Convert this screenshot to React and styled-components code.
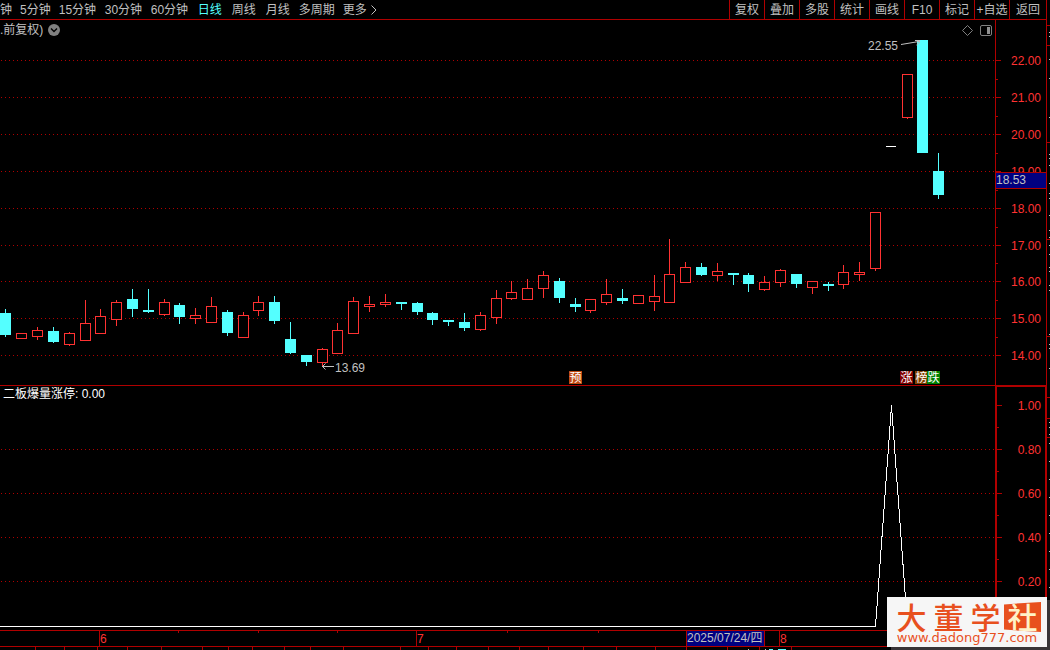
import {useState} from 'react';
import styled, {createGlobalStyle} from 'styled-components';

const RED = '#b00000';
const UP = '#ff3232';
const DOWN = '#54ffff';
const GREY = '#c0c0c0';
const NAVY = '#000080';

const GlobalStyle = createGlobalStyle`
  * {
    box-sizing: border-box;
  }

  body {
    margin: 0;
    background-color: #000;
    color: ${GREY};
    font-family: 'Liberation Sans', 'Noto Sans CJK SC', sans-serif;
    font-size: 12px;
    line-height: 16px;
    overflow: hidden;
  }

  svg {
    display: block;
  }

  svg text {
    font-size: 12px;
  }
`;

const Page = styled.div`
  display: grid;
  grid-template-columns: minmax(0, 1fr) 3px;
  position: relative;
`;

const Main = styled.main`
  min-width: 0;
  border-right: 1px solid ${RED};
`;

const Toolbar = styled.nav`
  display: flex;
  justify-content: space-between;
  height: 20px;
  border-bottom: 1px solid ${RED};
`;

const Periods = styled.div`
  display: flex;
  align-items: center;
  gap: 8px;
`;

const PeriodButton = styled.button`
  display: flex;
  align-items: center;
  gap: 4px;
  min-width: ${(props) => (props.$wide ? '38px' : '0')};
  padding: 0 ${(props) => (props.$padded ? '1px' : '0')};
  border: 0;
  background: none;
  color: ${(props) => (props.$active ? DOWN : GREY)};
  font: inherit;
  white-space: nowrap;
  cursor: pointer;

  &:hover {
    color: ${DOWN};
  }
`;

const Actions = styled.div`
  display: flex;
`;

const ActionButton = styled.button`
  width: 35px;
  padding: 0;
  border: 0;
  border-left: 1px solid ${RED};
  background: none;
  color: ${GREY};
  font: inherit;
  white-space: nowrap;
  cursor: pointer;

  &:last-child {
    width: 37px;
  }

  &:hover {
    color: #fff;
  }
`;

const Panel = styled.section`
  display: grid;
  grid-template-columns: minmax(0, 1fr) 51px;
`;

const PlotArea = styled.div`
  min-width: 0;
  border-top: ${(props) => (props.$divided ? `1px solid ${RED}` : '0')};
`;

const PanelHeader = styled.header`
  display: flex;
  align-items: center;
  justify-content: space-between;
  height: ${(props) => (props.$compact ? '16px' : '20px')};
  padding: 0 3px 0 ${(props) => (props.$compact ? '3px' : '0')};
  color: ${(props) => (props.$compact ? '#fff' : GREY)};
`;

const HeaderGroup = styled.div`
  display: flex;
  align-items: center;
  gap: ${(props) => props.$gap};
`;

const IconButton = styled.button`
  display: flex;
  padding: 0;
  border: 0;
  background: none;
  cursor: pointer;
`;

const Plot = styled.svg`
  width: 100%;
  height: ${(props) => props.$height};
`;

const PriceAxis = styled.div`
  border-left: 1px solid ${RED};
`;

const IndicatorAxis = styled.div`
  border: solid ${RED};
  border-width: 2px 1px 0 2px;
`;

const Logo = styled.a`
  position: absolute;
  right: 3px;
  bottom: 3px;
  width: 160px;
  height: 50px;
  padding: 5px 6px 0;
  background-color: #f6f6f6;
  box-shadow: 4px 3px 0 #383436;
  color: #e8501e;
  text-decoration: none;
`;

const LogoName = styled.span`
  display: grid;
  grid-template-columns: repeat(4, 1fr);
  height: 30px;
  font-family: 'Noto Sans CJK SC', sans-serif;
  font-size: 30px;
  font-weight: 500;
  line-height: 28px;
  text-align: center;
`;

const LogoSeal = styled.span`
  background-color: #e8501e;
  clip-path: polygon(0 8%, 100% 0, 100% 100%, 0 92%);
  color: #fff3c8;
`;

const LogoUrl = styled.span`
  display: block;
  font-family: 'DejaVu Sans', sans-serif;
  font-size: 13px;
  line-height: 11px;
  text-align: center;
  white-space: nowrap;
`;

const periods = [
  {label: '钟'},
  {label: '5分钟'},
  {label: '15分钟', wide: true},
  {label: '30分钟', wide: true},
  {label: '60分钟', wide: true},
  {label: '日线', padded: true},
  {label: '周线', padded: true},
  {label: '月线', padded: true},
  {label: '多周期'},
];

const actions = ['复权', '叠加', '多股', '统计', '画线', 'F10', '标记', '+自选', '返回'];

// [centre x, body top, body bottom, high, low, rising]
const candles = [
  [5, 313, 335, 309, 337, 0],
  [21, 333, 339, 333, 339, 1],
  [37, 330, 337, 327, 340, 1],
  [53, 331, 342, 327, 343, 0],
  [69, 333, 345, 332, 346, 1],
  [85, 323, 341, 300, 341, 1],
  [100, 316, 334, 309, 334, 1],
  [116, 302, 320, 300, 326, 1],
  [132, 299, 309, 289, 317, 0],
  [148, 310, 312, 289, 313, 0],
  [164, 302, 315, 299, 316, 1],
  [179, 305, 317, 303, 324, 0],
  [195, 315, 319, 308, 324, 1],
  [211, 306, 323, 297, 323, 1],
  [227, 312, 333, 310, 336, 0],
  [243, 315, 338, 312, 338, 1],
  [258, 302, 311, 296, 316, 1],
  [274, 302, 321, 296, 324, 0],
  [290, 339, 353, 322, 354, 0],
  [306, 355, 362, 355, 366, 0],
  [322, 349, 363, 348, 366, 1],
  [337, 330, 354, 323, 354, 1],
  [353, 301, 334, 297, 334, 1],
  [369, 304, 307, 296, 312, 1],
  [385, 302, 305, 294, 307, 1],
  [401, 302, 304, 302, 310, 0],
  [417, 303, 312, 302, 315, 0],
  [432, 313, 320, 312, 325, 0],
  [448, 320, 322, 320, 326, 0],
  [464, 322, 328, 313, 331, 0],
  [480, 315, 330, 312, 331, 1],
  [496, 298, 318, 290, 324, 1],
  [511, 292, 299, 281, 300, 1],
  [527, 288, 300, 279, 300, 1],
  [543, 275, 289, 271, 298, 1],
  [559, 281, 298, 278, 303, 0],
  [575, 304, 307, 298, 312, 0],
  [590, 299, 311, 299, 313, 1],
  [606, 294, 303, 279, 305, 1],
  [622, 298, 301, 289, 304, 0],
  [638, 295, 304, 295, 304, 1],
  [654, 296, 302, 275, 311, 1],
  [669, 274, 303, 239, 303, 1],
  [685, 267, 283, 262, 283, 1],
  [701, 267, 275, 263, 276, 0],
  [717, 271, 276, 263, 281, 1],
  [733, 273, 275, 273, 285, 0],
  [748, 275, 284, 273, 292, 0],
  [764, 282, 290, 276, 291, 1],
  [780, 270, 283, 269, 287, 1],
  [796, 274, 284, 274, 288, 0],
  [812, 281, 288, 281, 294, 1],
  [828, 284, 286, 282, 291, 0],
  [843, 272, 285, 265, 289, 1],
  [859, 272, 275, 262, 281, 1],
  [875, 212, 269, 212, 271, 1],
  [907, 74, 118, 74, 119, 1],
  [922, 40, 153, 40, 153, 0],
  [938, 171, 195, 153, 199, 0],
];

const priceLevels = [
  [60, '22.00'],
  [97, '21.00'],
  [134, '20.00'],
  [171, '19.00'],
  [208, '18.00'],
  [245, '17.00'],
  [281, '16.00'],
  [318, '15.00'],
  [355, '14.00'],
];
const priceMinor = [79, 116, 153, 190, 227, 263, 300, 337];

const indicatorLevels = [
  [405, '1.00'],
  [449, '0.80'],
  [493, '0.60'],
  [537, '0.40'],
  [581, '0.20'],
];
const indicatorMinor = [427, 471, 515, 559, 603];

const marks = [
  [569, '预', '#c04810'],
  [900, '涨', '#800000'],
  [915, '榜', '#804000'],
  [927, '跌', '#008000'],
];

const months = [
  [99, '6'],
  [416, '7'],
  [779, '8'],
];
const weekTicks = [178, 258, 337, 507, 598];
const footTicks = [
  35, 64, 97, 127, 161, 202, 228, 252, 284, 310, 343, 400, 428, 456, 488, 519, 548, 583, 616, 655, 686, 727, 759, 791,
];

const stripLines = [25, 45, 142, 239, 336, 397, 418, 437];
const stripDots = [
  32, 36, 59, 78, 117, 154, 158, 165, 183, 193, 198, 215, 230, 237, 245, 254, 267, 271, 285, 290, 334, 344, 348, 368,
  422, 427, 434, 443, 461, 479, 497, 515, 533, 551, 569, 587,
];

const GridLine = ({y}) => (
  <line x1="1" x2="995" y1={y + 0.5} y2={y + 0.5} stroke={RED} strokeDasharray="1 3" shapeRendering="crispEdges" />
);

const Candle = ({data}) => {
  const [x, top, bottom, high, low, rising] = data;
  const color = rising ? UP : DOWN;

  return (
    <g shapeRendering="crispEdges">
      {high < top && <rect x={x} y={high} width="1" height={top - high} fill={color} />}
      {low > bottom && <rect x={x} y={bottom} width="1" height={low - bottom} fill={color} />}
      {rising ? (
        <rect x={x - 4.5} y={top + 0.5} width="10" height={bottom - top - 1} fill="#000" stroke={color} />
      ) : (
        <rect x={x - 5} y={top} width="11" height={bottom - top} fill={color} />
      )}
    </g>
  );
};

const AxisScale = ({levels, minor, left, right}) => (
  <>
    {levels.map(([y, label]) => (
      <g key={label}>
        <rect x={left} y={y} width="5" height="1" fill={RED} />
        <text x={right} y={y + 5} textAnchor="end" fill={UP}>
          {label}
        </text>
      </g>
    ))}
    {minor.map((y) => (
      <rect key={y} x={left} y={y} width="2" height="1" fill={RED} />
    ))}
  </>
);

const PricePlot = () => (
  <Plot $height="345px" viewBox="0 40 995 345" preserveAspectRatio="xMaxYMin meet">
    {priceLevels.map(([y]) => (
      <GridLine key={y} y={y} />
    ))}
    {candles.map((data) => (
      <Candle key={data[0]} data={data} />
    ))}
    <rect x="886" y="146" width="10" height="1" fill="#fff" />
    <text x="868" y="50" fill={GREY}>
      22.55
    </text>
    <path d="M901 44.5L919 41.5M915 40.5H919.5V42.5L916.5 45" fill="none" stroke={GREY} />
    <text x="335" y="372" fill={GREY}>
      13.69
    </text>
    <path d="M334 366.5H322M325.5 363.5L322.5 366.5L325.5 369.5" fill="none" stroke={GREY} />
    {marks.map(([x, label, color]) => (
      <g key={label}>
        <rect x={x} y="371" width="13" height="13" fill={color} />
        <text x={x + 0.5} y="382" fill="#fff">
          {label}
        </text>
      </g>
    ))}
  </Plot>
);

const IndicatorPlot = () => (
  <Plot $height="228px" viewBox="0 402 995 228" preserveAspectRatio="xMaxYMin meet">
    {indicatorLevels.slice(1).map(([y]) => (
      <GridLine key={y} y={y} />
    ))}
    <polyline
      points="0,626.5 875.5,626.5 891.5,405.5 907.5,626.5 995,626.5"
      fill="none"
      stroke="#fff"
      shapeRendering="crispEdges"
    />
  </Plot>
);

const TimeAxis = () => (
  <Plot $height="20px" viewBox="0 630 1046 20" preserveAspectRatio="xMaxYMin meet">
    <g fill={RED} shapeRendering="crispEdges">
      <rect x="0" y="630" width="1046" height="1" />
      <rect x="0" y="646" width="1046" height="1" />
      {weekTicks.map((x) => (
        <rect key={x} x={x} y="631" width="1" height="2" />
      ))}
      {footTicks.map((x) => (
        <rect key={x} x={x} y="647" width="1" height="3" />
      ))}
      {months.map(([x]) => (
        <rect key={x} x={x} y="631" width="1" height="15" />
      ))}
      <rect x="686" y="631" width="79" height="15" />
    </g>
    <rect x="687" y="631" width="77" height="15" fill={NAVY} />
    {months.map(([x, label]) => (
      <text key={label} x={x + 1} y="643" fill={UP}>
        {label}
      </text>
    ))}
    <text x="687" y="642" fill={GREY}>
      2025/07/24/四
    </text>
    <path d="M748 649.5H749M765 649.5H766" stroke={GREY} />
    <path d="M769 649.5H773M778 649.5H786" stroke={DOWN} />
  </Plot>
);

const SideStrip = () => (
  <svg width="3" height="650" shapeRendering="crispEdges">
    {stripLines.map((y) => (
      <rect key={y} x="0" y={y} width="3" height="1" fill={RED} />
    ))}
    {stripDots.map((y) => (
      <rect key={y} x="2" y={y} width="1" height="1" fill={GREY} />
    ))}
    <rect x="0" y="600" width="3" height="50" fill="#383436" />
  </svg>
);

const App = () => {
  const [period, setPeriod] = useState('日线');

  return (
    <>
      <GlobalStyle />
      <Page>
        <Main>
          <Toolbar>
            <Periods>
              {periods.map(({label, wide, padded}) => (
                <PeriodButton
                  key={label}
                  $wide={wide}
                  $padded={padded}
                  $active={label === period}
                  onClick={() => setPeriod(label)}
                >
                  {label}
                </PeriodButton>
              ))}
              <PeriodButton>
                更多
                <svg width="6" height="10" fill="none" stroke="currentColor">
                  <path d="M0.5 0.5L5 5L0.5 9.5" />
                </svg>
              </PeriodButton>
            </Periods>
            <Actions>
              {actions.map((label) => (
                <ActionButton key={label}>{label}</ActionButton>
              ))}
            </Actions>
          </Toolbar>

          <Panel>
            <PlotArea>
              <PanelHeader>
                <HeaderGroup $gap="5px">
                  <span>.前复权)</span>
                  <IconButton aria-label="展开">
                    <svg width="12" height="12">
                      <circle cx="6" cy="6" r="6" fill="#808080" />
                      <path d="M3 4.5L6 7.5L9 4.5" fill="none" stroke="#000" strokeWidth="1.4" />
                    </svg>
                  </IconButton>
                </HeaderGroup>
                <HeaderGroup $gap="7px">
                  <IconButton aria-label="标记">
                    <svg width="11" height="11">
                      <path d="M5.5 0.5L10.5 5.5L5.5 10.5L0.5 5.5Z" fill="none" stroke="#808080" />
                    </svg>
                  </IconButton>
                  <IconButton aria-label="侧栏">
                    <svg width="12" height="11">
                      <rect x="0.5" y="0.5" width="11" height="10" rx="1.5" fill="none" stroke="#808080" />
                      <rect x="7" y="2" width="3" height="7" fill="#909090" />
                    </svg>
                  </IconButton>
                </HeaderGroup>
              </PanelHeader>
              <PricePlot />
            </PlotArea>
            <PriceAxis>
              <svg width="50" height="365" viewBox="996 20 50 365">
                <AxisScale levels={priceLevels} minor={priceMinor} left={996} right={1041} />
                <rect x="996" y="172" width="50" height="17" fill={RED} />
                <rect x="996" y="173" width="50" height="15" fill={NAVY} />
                <text x="996" y="184" fill={GREY}>
                  18.53
                </text>
              </svg>
            </PriceAxis>
          </Panel>

          <Panel>
            <PlotArea $divided>
              <PanelHeader $compact>二板爆量涨停: 0.00</PanelHeader>
              <IndicatorPlot />
            </PlotArea>
            <IndicatorAxis>
              <svg width="48" height="243" viewBox="997 387 48 243">
                <AxisScale levels={indicatorLevels} minor={indicatorMinor} left={997} right={1041} />
              </svg>
            </IndicatorAxis>
          </Panel>

          <TimeAxis />
        </Main>
        <SideStrip />
        <Logo href="#">
          <LogoName>
            <span>大</span>
            <span>董</span>
            <span>学</span>
            <LogoSeal>社</LogoSeal>
          </LogoName>
          <LogoUrl>www.dadong777.com</LogoUrl>
        </Logo>
      </Page>
    </>
  );
};

export default App;
